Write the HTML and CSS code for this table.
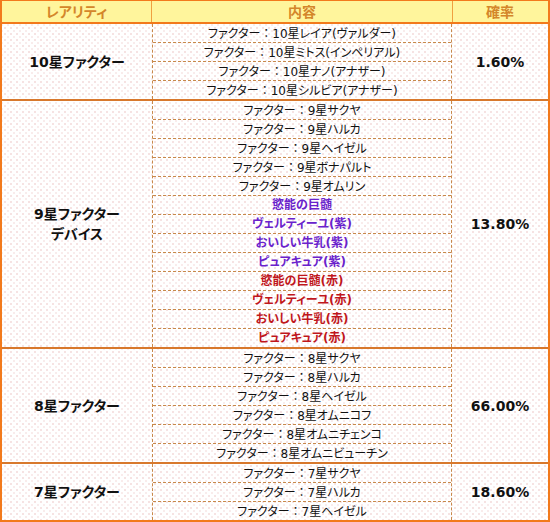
FILE: index.html
```html
<!DOCTYPE html>
<html lang="ja">
<head>
<meta charset="utf-8">
<link rel="stylesheet" href="styles.css">
</head>
<body>
<div class="tbl">
  <div class="row head">
    <div class="c1">レアリティ</div>
    <div class="c2">内容</div>
    <div class="c3">確率</div>
  </div>

  <div class="row sec">
    <div class="c1 label">10星ファクター</div>
    <div class="c2 list">
      <div class="item">ファクター<span class="colon">：</span>10星レイア(ヴァルダー)</div>
      <div class="item">ファクター<span class="colon">：</span>10星ミトス(インペリアル)</div>
      <div class="item">ファクター<span class="colon">：</span>10星ナノ(アナザー)</div>
      <div class="item">ファクター<span class="colon">：</span>10星シルビア(アナザー)</div>
    </div>
    <div class="c3 rate">1.60%</div>
  </div>

  <div class="row sec">
    <div class="c1 label">9星ファクター<br>デバイス</div>
    <div class="c2 list">
      <div class="item">ファクター<span class="colon">：</span>9星サクヤ</div>
      <div class="item">ファクター<span class="colon">：</span>9星ハルカ</div>
      <div class="item">ファクター<span class="colon">：</span>9星ヘイゼル</div>
      <div class="item">ファクター<span class="colon">：</span>9星ボナパルト</div>
      <div class="item">ファクター<span class="colon">：</span>9星オムリン</div>
      <div class="item purple">慾能の巨髄</div>
      <div class="item purple">ヴェルティーユ(紫)</div>
      <div class="item purple">おいしい牛乳(紫)</div>
      <div class="item purple">ピュアキュア(紫)</div>
      <div class="item red">慾能の巨髄(赤)</div>
      <div class="item red">ヴェルティーユ(赤)</div>
      <div class="item red">おいしい牛乳(赤)</div>
      <div class="item red">ピュアキュア(赤)</div>
    </div>
    <div class="c3 rate">13.80%</div>
  </div>

  <div class="row sec">
    <div class="c1 label">8星ファクター</div>
    <div class="c2 list">
      <div class="item">ファクター<span class="colon">：</span>8星サクヤ</div>
      <div class="item">ファクター<span class="colon">：</span>8星ハルカ</div>
      <div class="item">ファクター<span class="colon">：</span>8星ヘイゼル</div>
      <div class="item">ファクター<span class="colon">：</span>8星オムニコフ</div>
      <div class="item">ファクター<span class="colon">：</span>8星オムニチェンコ</div>
      <div class="item">ファクター<span class="colon">：</span>8星オムニビューチン</div>
    </div>
    <div class="c3 rate">66.00%</div>
  </div>

  <div class="row sec last">
    <div class="c1 label">7星ファクター</div>
    <div class="c2 list">
      <div class="item">ファクター<span class="colon">：</span>7星サクヤ</div>
      <div class="item">ファクター<span class="colon">：</span>7星ハルカ</div>
      <div class="item">ファクター<span class="colon">：</span>7星ヘイゼル</div>
    </div>
    <div class="c3 rate">18.60%</div>
  </div>
</div>
</body>
</html>
```

FILE: styles.css
```css
html, body {
  margin: 0;
  padding: 0;
  background: #fff;
}

.tbl {
  width: 550px;
  height: 522px;
  box-sizing: border-box;
  border: 2px solid #f27a1c;
  border-top-width: 1px;
  font-family: "DejaVu Sans", "Noto Sans CJK JP", sans-serif;
  font-feature-settings: "palt";
  color: #111;
  background-color: #fff;
  background-image:
    radial-gradient(circle, #f6e3e3 0.9px, transparent 1.3px),
    radial-gradient(circle, #f9ecec 0.9px, transparent 1.3px);
  background-size: 6px 6px, 6px 6px;
  background-position: 0 0, 3px 3px;
}

.row {
  display: grid;
  grid-template-columns: 150px 300px 1fr;
}

.head {
  height: 21px;
  background: #fff59c;
  border-bottom: 2px solid #f27a1c;
  color: #d4862a;
  font-weight: bold;
  font-size: 14px;
  line-height: 21px;
  text-align: center;
  font-family: "Noto Sans CJK JP", sans-serif;
}

.head .c1 {
  border-right: 1px solid #f0a040;
}

.head .c2 {
  border-right: 1px solid #f0a040;
  margin-right: -1px;
}

.sec {
  border-bottom: 2px solid #d8782c;
}

.sec.last {
  border-bottom: none;
}

.label {
  display: flex;
  align-items: center;
  justify-content: center;
  text-align: center;
  font-weight: bold;
  font-size: 14px;
  line-height: 20px;
}

.rate {
  display: flex;
  align-items: center;
  justify-content: center;
  font-weight: bold;
  font-size: 14px;
}

.list {
  border-left: 1px dashed #c8894b;
  border-right: 1px dashed #c8894b;
}

.item {
  height: 18px;
  line-height: 18px;
  font-size: 12px;
  text-align: center;
  border-bottom: 1px dashed #c8894b;
  white-space: nowrap;
}

.item:last-child {
  border-bottom: none;
}

.colon {
  font-family: "Noto Sans CJK JP", sans-serif;
  font-feature-settings: normal;
}

.purple {
  color: #6a22cc;
  font-weight: bold;
}

.red {
  color: #c0161c;
  font-weight: bold;
}
```
